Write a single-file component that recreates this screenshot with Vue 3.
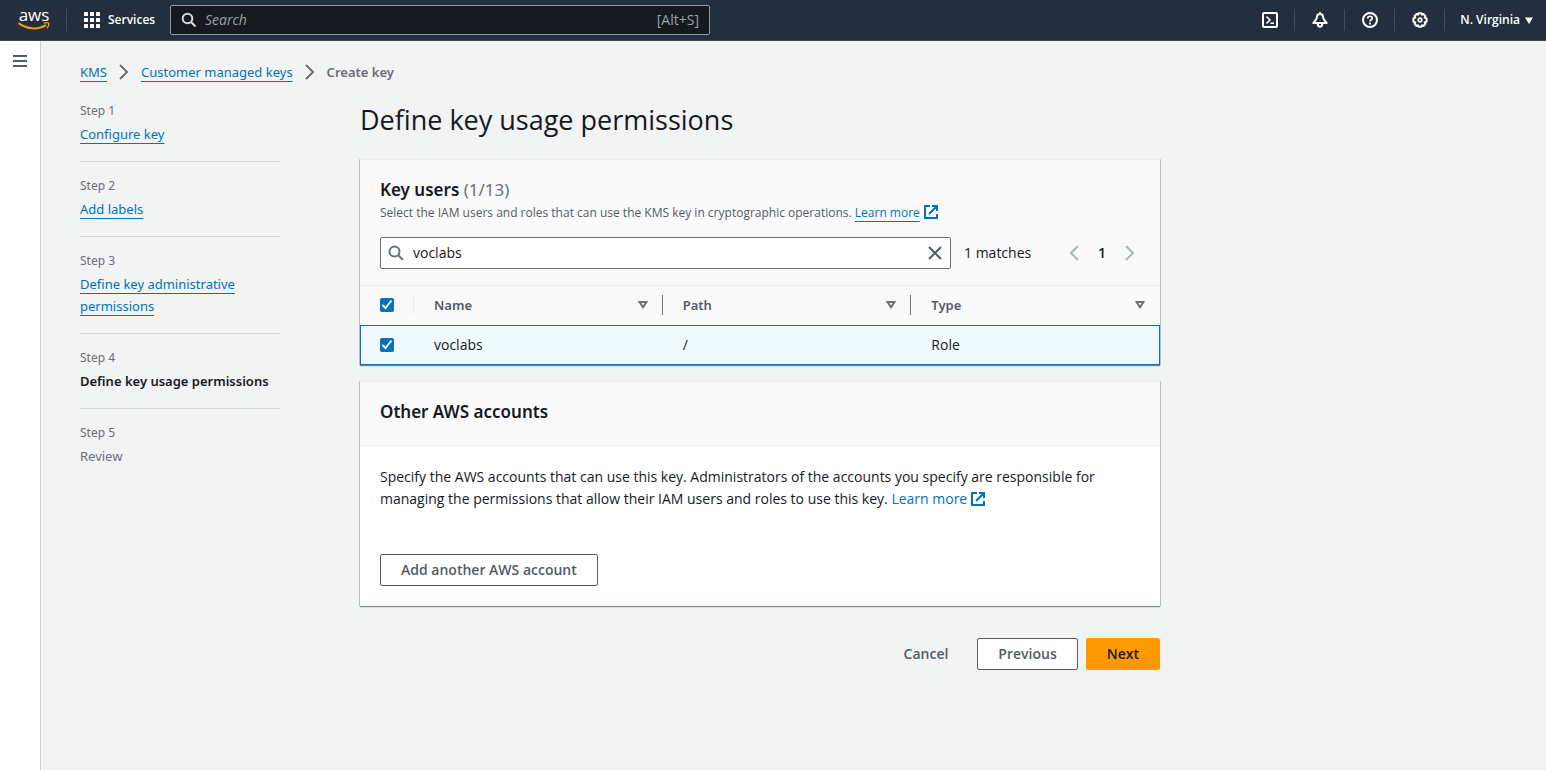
<script setup>
import { ref } from 'vue'

const filter = ref('voclabs')
const search = ref('')
const allChecked = ref(true)
const rows = ref([{ name: 'voclabs', path: '/', type: 'Role', checked: true }])
const columns = ['Name', 'Path', 'Type']
const steps = [
  { label: 'Step 1', title: 'Configure key', state: 'link' },
  { label: 'Step 2', title: 'Add labels', state: 'link' },
  { label: 'Step 3', title: 'Define key administrative permissions', state: 'link' },
  { label: 'Step 4', title: 'Define key usage permissions', state: 'current' },
  { label: 'Step 5', title: 'Review', state: 'todo' }
]
</script>

<template>
  <div class="page">
    <header class="topbar">
      <a href="#" class="logo" aria-label="AWS home">
        <svg width="32" height="32" viewBox="0 0 32 32">
          <text x="16" y="17" text-anchor="middle" class="logo-text">aws</text>
          <path d="M0.5 19C9 25.500 20 26 28 21.200" fill="none" stroke="#ff9900" stroke-width="2" />
          <path d="M25.500 19.200C28 18.500 30 18.600 30.800 19.300C31 21 30.200 23 28.800 24.300" fill="none" stroke="#ff9900" stroke-width="1.300" />
        </svg>
      </a>
      <button class="services" type="button">
        <svg width="16" height="16" viewBox="0 0 16 16" fill="#fff">
          <template v-for="r in 3" :key="r">
            <rect v-for="c in 3" :key="c" :x="(c - 1) * 6" :y="(r - 1) * 6" width="4" height="4" rx="0.5" />
          </template>
        </svg>
        Services
      </button>
      <label class="global-search">
        <svg width="16" height="16" viewBox="0 0 16 16" fill="none" stroke="#d5dbdb" stroke-width="2">
          <circle cx="6.500" cy="6.500" r="4.800" /><path d="M10 10l4.500 4.500" />
        </svg>
        <input v-model="search" type="text" placeholder="Search" aria-label="Search" />
        <span>[Alt+S]</span>
      </label>
      <nav class="tools">
        <button type="button" aria-label="CloudShell">
          <svg width="16" height="16" viewBox="0 0 16 16" fill="none" stroke="#fff" stroke-width="2" stroke-linejoin="round">
            <rect x="1" y="1" width="14" height="14" rx="1" /><path d="M4.500 4.500L8 8l-3.500 3.500" stroke-width="1.600" /><path d="M8.500 11.200h3.500" stroke-width="1.600" />
          </svg>
        </button>
        <button type="button" aria-label="Notifications">
          <svg width="16" height="16" viewBox="0 0 16 16" fill="none" stroke="#fff" stroke-width="2" stroke-linejoin="round">
            <path d="M8 0v2M8 2C6 2 5 3.200 4.900 5C4.800 8 3 8.500 1.300 11H14.700C13 8.500 11.200 8 11.100 5C11 3.200 10 2 8 2Z" /><path d="M5.800 11.500C5.800 14 6.500 14.800 8 14.800S10.200 14 10.200 11.500" />
          </svg>
        </button>
        <button type="button" aria-label="Help">
          <svg width="16" height="16" viewBox="0 0 16 16" fill="none" stroke="#fff" stroke-width="2">
            <circle cx="8" cy="8" r="7" /><path d="M5.700 6.500C5.700 3.500 10.300 3.600 10.300 6.200C10.300 7.800 8 7.800 8 9.600" stroke-width="1.700" /><path d="M8 10.600v1.900" stroke-width="1.800" />
          </svg>
        </button>
        <button type="button" aria-label="Settings">
          <svg width="16" height="16" viewBox="0 0 16 16" fill="none" stroke="#fff" stroke-width="2" stroke-linejoin="round">
            <path d="M6.600 1.200h2.800l.5 1.500 1.500-.7 2 2-.7 1.500 1.900.9v3.200l-1.900.9.7 1.500-2 2-1.500-.7-.5 1.500H6.600l-.5-1.500-1.500.7-2-2 .7-1.500-1.900-.9V6.400l1.900-.9-.7-1.500 2-2 1.500.7z" />
            <circle cx="8" cy="8" r="1.800" stroke-width="1.700" />
          </svg>
        </button>
      </nav>
      <button class="region" type="button">
        N. Virginia
        <svg width="8" height="7" viewBox="0 0 8 7" fill="#fff"><path d="M0 0.500h8L4 7z" /></svg>
      </button>
    </header>

    <div class="body">
      <aside class="rail">
        <button type="button" aria-label="Open navigation">
          <svg width="14" height="12" viewBox="0 0 14 12" fill="#545b64"><path d="M0 0h14v2H0zM0 5h14v2H0zM0 10h14v2H0z" /></svg>
        </button>
      </aside>

      <div class="content">
        <nav class="crumbs" aria-label="Breadcrumb">
          <a href="#">KMS</a>
          <svg width="10" height="16" viewBox="0 0 10 16" fill="none" stroke="#687078" stroke-width="2"><path d="M1 1l7 7-7 7" /></svg>
          <a href="#">Customer managed keys</a>
          <svg width="10" height="16" viewBox="0 0 10 16" fill="none" stroke="#687078" stroke-width="2"><path d="M1 1l7 7-7 7" /></svg>
          <b>Create key</b>
        </nav>

        <div class="wizard">
          <ol class="steps">
            <li v-for="s in steps" :key="s.label">
              <small>{{ s.label }}</small>
              <a v-if="s.state === 'link'" href="#">{{ s.title }}</a>
              <span v-else :class="s.state">{{ s.title }}</span>
            </li>
          </ol>

          <main>
            <h1>Define key usage permissions</h1>

            <section class="card">
              <div class="card-head users-head">
                <h2>Key users <span>(1/13)</span></h2>
                <p class="hint">
                  Select the IAM users and roles that can use the KMS key in cryptographic operations.
                  <a href="#" class="underlined">Learn more</a><svg class="ext" width="14" height="14" viewBox="0 0 14 14" fill="none" stroke="#0073bb" stroke-width="2"><path d="M6 1H1v12h12V9M8 1h5v5M13 1L5 9" /></svg>
                </p>
                <div class="filter-row">
                  <div class="filter">
                    <svg width="16" height="16" viewBox="0 0 16 16" fill="none" stroke="#687078" stroke-width="2">
                      <circle cx="6.500" cy="6.500" r="5" /><path d="M10 10l4.800 4.800" />
                    </svg>
                    <input v-model="filter" type="text" aria-label="Filter key users" />
                    <button type="button" aria-label="Clear filter" @click="filter = ''">
                      <svg width="14" height="14" viewBox="0 0 14 14" fill="none" stroke="#545b64" stroke-width="2"><path d="M1 1l12 12M13 1L1 13" /></svg>
                    </button>
                  </div>
                  <span class="matches">1 matches</span>
                  <div class="pager">
                    <button type="button" aria-label="Previous page">
                      <svg width="10" height="16" viewBox="0 0 10 16" fill="none" stroke="#aab7b8" stroke-width="2"><path d="M9 1L2 8l7 7" /></svg>
                    </button>
                    <b>1</b>
                    <button type="button" aria-label="Next page">
                      <svg width="10" height="16" viewBox="0 0 10 16" fill="none" stroke="#aab7b8" stroke-width="2"><path d="M1 1l7 7-7 7" /></svg>
                    </button>
                  </div>
                </div>
              </div>

              <table>
                <thead>
                  <tr>
                    <th class="pick">
                      <div class="cell">
                        <label class="check">
                          <input v-model="allChecked" type="checkbox" aria-label="Select all" />
                          <svg width="14" height="14" viewBox="0 0 14 14" fill="none" stroke="#fff" stroke-width="2"><path d="M2.500 7l3 3 6-7.500" /></svg>
                        </label>
                      </div>
                    </th>
                    <th v-for="c in columns" :key="c">
                      <div class="cell">
                        {{ c }}
                        <svg width="10" height="8" viewBox="0 0 10 8" fill="none" stroke="#687078" stroke-width="2"><path d="M1.500 1h7L5 6.200z" /></svg>
                      </div>
                    </th>
                  </tr>
                </thead>
                <tbody>
                  <tr v-for="r in rows" :key="r.name">
                    <td class="pick">
                      <label class="check">
                        <input v-model="r.checked" type="checkbox" :aria-label="'Select ' + r.name" />
                        <svg width="14" height="14" viewBox="0 0 14 14" fill="none" stroke="#fff" stroke-width="2"><path d="M2.500 7l3 3 6-7.500" /></svg>
                      </label>
                    </td>
                    <td>{{ r.name }}</td>
                    <td>{{ r.path }}</td>
                    <td>{{ r.type }}</td>
                  </tr>
                </tbody>
              </table>
            </section>

            <section class="card">
              <div class="card-head other-head"><h2>Other AWS accounts</h2></div>
              <div class="card-body">
                <p>
                  Specify the AWS accounts that can use this key. Administrators of the accounts you specify are responsible for
                  managing the permissions that allow their IAM users and roles to use this key.
                  <a href="#">Learn more</a><svg class="ext" width="14" height="14" viewBox="0 0 14 14" fill="none" stroke="#0073bb" stroke-width="2"><path d="M6 1H1v12h12V9M8 1h5v5M13 1L5 9" /></svg>
                </p>
                <button type="button" class="btn">Add another AWS account</button>
              </div>
            </section>

            <div class="actions">
              <button type="button" class="btn plain">Cancel</button>
              <button type="button" class="btn">Previous</button>
              <button type="button" class="btn primary">Next</button>
            </div>
          </main>
        </div>
      </div>
    </div>
  </div>
</template>

<style>
body { background: #f2f3f3; }
</style>

<style scoped>
.page {
  min-height: 100vh;
  display: flex;
  flex-direction: column;
  font-family: "Open Sans", "Noto Sans", sans-serif;
  font-size: 14px;
  line-height: 22px;
  color: #16191f;
}
.page * { box-sizing: border-box; }
button, input { font: inherit; color: inherit; margin: 0; }
button { background: none; border: 0; padding: 0; cursor: pointer; }
svg { display: block; flex: none; }
a { color: #0073bb; text-decoration: none; }
h1, h2, p, ol { margin: 0; padding: 0; font-weight: 400; }
b { font-weight: 600; }
.crumbs, .steps, h2, th { font-family: "Noto Sans", "Open Sans", sans-serif; font-size: 13px; }

.topbar {
  height: 41px;
  display: flex;
  align-items: center;
  background: #232f3e;
  border-bottom: 1px solid #414750;
  color: #fff;
}
.logo {
  height: 22px;
  width: 67px;
  padding-left: 18px;
  display: flex;
  align-items: center;
  border-right: 1px solid #414d5c;
}
.logo-text { font-size: 17px; font-weight: 500; fill: #fff; }
.services {
  display: flex;
  align-items: center;
  gap: 8px;
  width: 103px;
  padding-left: 17px;
  font-size: 12px;
  font-weight: 600;
}
.global-search {
  flex: 0 1 540px;
  height: 30px;
  display: flex;
  align-items: center;
  gap: 8px;
  padding: 0 10px;
  background: #16191f;
  border: 1px solid #879596;
  border-radius: 2px;
  color: #95a5a6;
}
.global-search input { flex: 1; min-width: 0; border: 0; padding: 0; background: none; outline: 0; font-style: italic; }
.global-search input::placeholder { color: #95a5a6; opacity: 1; }
.tools { margin-left: auto; display: flex; }
.tools button {
  width: 50px;
  height: 22px;
  display: flex;
  align-items: center;
  justify-content: center;
  border-right: 1px solid #414d5c;
}
.region {
  display: flex;
  align-items: center;
  gap: 5px;
  padding: 0 13px 0 15px;
  font-size: 12px;
  font-weight: 600;
}

.body { flex: 1; display: flex; }
.rail { width: 41px; background: #fff; border-right: 1px solid #ccd1d1; padding: 14px 13px; }
.rail button { display: block; }
.content { flex: 1; min-width: 0; max-width: 1159px; padding: 20px 40px 40px 39px; }
.crumbs { display: flex; align-items: center; gap: 12px; color: #687078; }
.crumbs a, .steps a, .underlined {
  text-decoration: underline;
  text-decoration-skip-ink: none;
  text-underline-offset: 4px;
  text-decoration-thickness: 1px;
}
.wizard { display: flex; gap: 80px; }
.steps { flex: 0 0 200px; list-style: none; padding-top: 18px; }
.steps li { border-bottom: 1px solid #d5dbdb; padding-bottom: 16px; margin-bottom: 14px; }
.steps li:last-child { border: 0; }
.steps small { display: block; font-size: 12px; line-height: 20px; margin-bottom: 2px; color: #687078; }
.steps .current { font-weight: 600; }
.steps .todo { color: #687078; }

main { flex: 1; min-width: 0; padding-top: 18px; }
h1 { font-size: 27px; line-height: 38px; margin-bottom: 20px; }
h2 { font-size: 17px; line-height: 22px; font-weight: 600; }
h2 span { font-weight: 400; color: #687078; }
.card {
  background: #fff;
  border-top: 1px solid #eaeded;
  box-shadow: 0 1px 1px 0 rgba(0, 28, 36, 0.5), 1px 0 0 0 #ccd1d1, -1px 0 0 0 #ccd1d1;
  margin-bottom: 16px;
}
.card-head { background: #fafafa; border-bottom: 1px solid #eaeded; }
.users-head { padding: 19px 20px 16px; }
.other-head { padding: 19px 20px 22px; }
.hint { font-size: 12px; line-height: 20px; margin: 2px 0 14px; color: #545b64; }
.ext { display: inline-block; vertical-align: -2px; margin-left: 4px; }
.filter-row { display: flex; align-items: center; }
.filter {
  flex: 1;
  height: 32px;
  display: flex;
  align-items: center;
  gap: 9px;
  padding: 0 8px 0 7px;
  background: #fff;
  border: 1px solid #687078;
  border-radius: 2px;
}
.filter input { flex: 1; min-width: 0; border: 0; padding: 0; background: none; outline: 0; }
.matches { width: 111px; padding-left: 13px; }
.pager { width: 78px; display: flex; align-items: center; justify-content: space-between; padding: 0 5px 0 7px; }

table { width: 100%; border-collapse: collapse; table-layout: fixed; }
th { height: 39px; padding: 9px 0 10px; background: #fafafa; text-align: left; font-weight: 600; color: #545b64; }
th .cell {
  height: 20px;
  display: flex;
  align-items: center;
  justify-content: space-between;
  padding: 0 14px 0 20px;
  border-right: 1px solid #687078;
}
th:last-child .cell { border-right: 0; padding-right: 15px; }
.pick { width: 54px; }
th.pick .cell { border-right-color: #eaeded; }
tbody tr { background: #f1faff; outline: 1px solid #0073bb; outline-offset: -1px; }
td { height: 40px; padding: 0 20px; }
.check { display: grid; width: 14px; height: 14px; }
.check input { grid-area: 1 / 1; appearance: none; width: 14px; height: 14px; background: #0073bb; border-radius: 2px; }
.check svg { grid-area: 1 / 1; pointer-events: none; }

.card-body { padding: 20px; }
.card-body p { margin-bottom: 44px; }
.btn {
  height: 32px;
  padding: 0 20px;
  border: 1px solid #545b64;
  border-radius: 2px;
  background: #fff;
  color: #545b64;
  font-weight: 600;
}
.actions { display: flex; justify-content: flex-end; gap: 8px; padding-top: 16px; }
.btn.plain { border-color: transparent; background: none; }
.btn.primary { background: #ff9900; border-color: #ff9900; color: #16191f; }
</style>
